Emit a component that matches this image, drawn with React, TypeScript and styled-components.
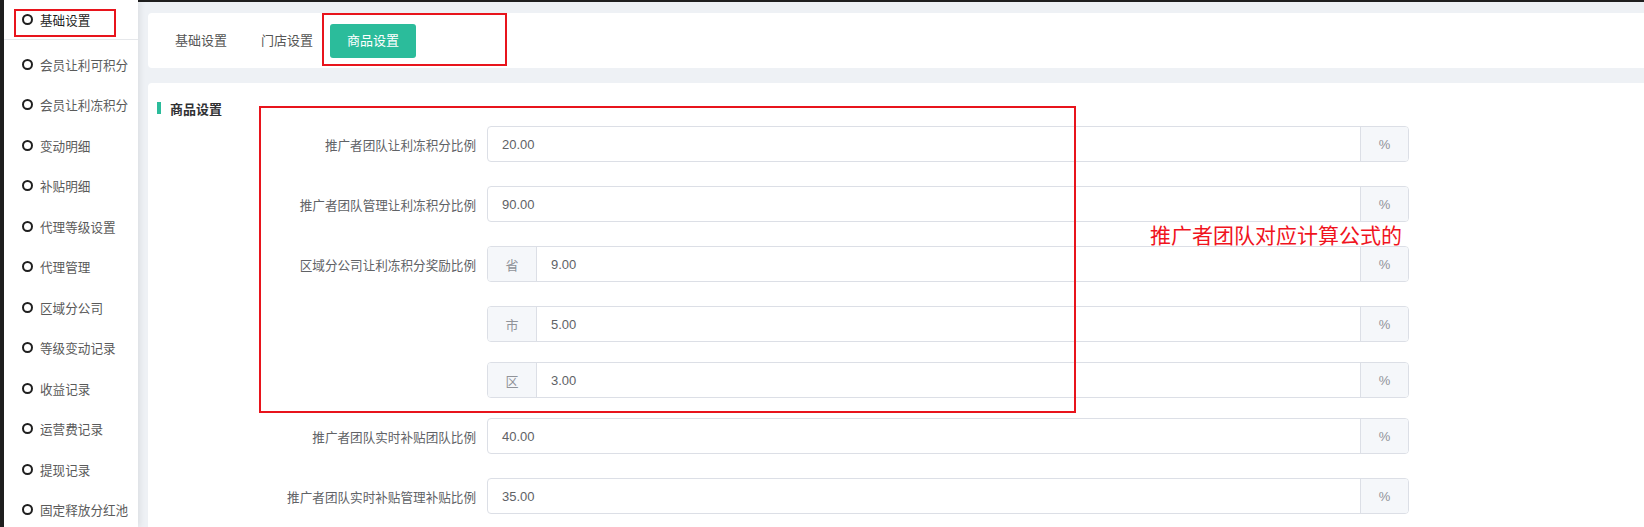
import React from "react";
import styled, { createGlobalStyle, css } from "styled-components";

const GlobalStyle = createGlobalStyle`
  html, body {
    margin: 0;
    padding: 0;
    height: 527px;
    overflow: hidden;
    background: #1f1f1f;
  }
  body {
    font-family: "Liberation Sans", "Noto Sans CJK SC", sans-serif;
    font-size: 13px;
  }
  * { box-sizing: border-box; }
`;

const Shell = styled.div`
  display: flex;
  height: 527px;
  padding-left: 4px;
  background: #1f1f1f;
`;

const Sidebar = styled.aside`
  position: relative;
  z-index: 1;
  width: 134px;
  flex-shrink: 0;
  background: #fff;
  box-shadow: 2px 0 6px rgba(0, 0, 0, 0.08);
`;

const SideHead = styled.div`
  height: 40px;
  border-bottom: 1px solid #e6e8eb;
`;

const NavList = styled.div`
  padding-top: 4px;
`;

const NavItem = styled.div<{ $active?: boolean }>`
  display: flex;
  align-items: center;
  gap: 7px;
  height: ${(p) => (p.$active ? "39px" : "40.5px")};
  padding-left: 18px;
  font-size: 12.6px;
  white-space: nowrap;
  color: ${(p) => (p.$active ? "#1f1f1f" : "#5a5a5a")};
`;

const Dot = styled.span`
  width: 11px;
  height: 11px;
  border: 2px solid #1f1f1f;
  border-radius: 50%;
  flex-shrink: 0;
`;

const Mark = styled.div<{ $l: number; $t: number; $w: number; $h: number }>`
  position: absolute;
  left: ${(p) => p.$l}px;
  top: ${(p) => p.$t}px;
  width: ${(p) => p.$w}px;
  height: ${(p) => p.$h}px;
  border: 2px solid #e8141c;
  pointer-events: none;
`;

const Main = styled.main`
  flex: 1;
  min-width: 0;
  display: flex;
  flex-direction: column;
  gap: 15px;
  overflow: hidden;
  background: #eef1f5;
  border-top: 2px solid #1f1f1f;
  padding: 11px 0 0 10px;
`;

const TabCard = styled.div`
  position: relative;
  flex-shrink: 0;
  display: flex;
  align-items: center;
  height: 55px;
  padding-left: 10px;
  background: #fff;
  border-radius: 4px 0 0 4px;
`;

const Tab = styled.div<{ $active?: boolean }>`
  height: 34px;
  line-height: 34px;
  padding: 0 17px;
  font-size: 13px;
  color: #555;
  border-radius: 3px;
  ${(p) =>
    p.$active &&
    css`
      background: #2bbc9b;
      color: #fff;
    `}
`;

const ContentCard = styled.section`
  position: relative;
  flex: 1 0 auto;
  background: #fff;
  border-radius: 4px 0 0 0;
  padding: 16px 0 0 9px;
`;

const SectionTitle = styled.div`
  display: flex;
  align-items: center;
  gap: 9px;
  height: 18px;
  font-size: 13px;
  font-weight: bold;
  color: #303133;
`;

const TitleBar = styled.span`
  width: 4px;
  height: 12px;
  background: #2bbc9b;
`;

const Form = styled.div`
  margin-top: 9px;
`;

const FormRow = styled.div<{ $tight?: boolean }>`
  display: flex;
  align-items: center;
  margin-bottom: ${(p) => (p.$tight ? "20px" : "24px")};
`;

const Label = styled.div`
  width: 330px;
  padding-right: 11px;
  text-align: right;
  font-size: 12.6px;
  color: #606266;
  white-space: nowrap;
`;

const InputGroup = styled.div`
  display: flex;
  width: 922px;
  height: 36px;
  border: 1px solid #dcdfe6;
  border-radius: 4px;
  overflow: hidden;
`;

const Addon = styled.div<{ $side: "left" | "right" }>`
  width: ${(p) => (p.$side === "left" ? "49px" : "48px")};
  flex-shrink: 0;
  display: flex;
  align-items: center;
  justify-content: center;
  background: #f5f7fa;
  color: #909399;
  font-size: 13px;
  ${(p) =>
    p.$side === "left"
      ? css`border-right: 1px solid #dcdfe6;`
      : css`border-left: 1px solid #dcdfe6;`}
`;

const Value = styled.div`
  flex: 1;
  display: flex;
  align-items: center;
  padding-left: 14px;
  color: #606266;
  font-size: 13px;
`;

const Note = styled.div`
  position: absolute;
  left: 1002px;
  top: 140px;
  font-size: 21px;
  line-height: 26px;
  color: #f0141e;
  white-space: nowrap;
`;

const navItems = [
  "会员让利可积分",
  "会员让利冻积分",
  "变动明细",
  "补贴明细",
  "代理等级设置",
  "代理管理",
  "区域分公司",
  "等级变动记录",
  "收益记录",
  "运营费记录",
  "提现记录",
  "固定释放分红池",
];

type Row = { label: string; value: string; prefix?: string; tight?: boolean };

const rows: Row[] = [
  { label: "推广者团队让利冻积分比例", value: "20.00" },
  { label: "推广者团队管理让利冻积分比例", value: "90.00" },
  { label: "区域分公司让利冻积分奖励比例", value: "9.00", prefix: "省" },
  { label: "", value: "5.00", prefix: "市", tight: true },
  { label: "", value: "3.00", prefix: "区", tight: true },
  { label: "推广者团队实时补贴团队比例", value: "40.00" },
  { label: "推广者团队实时补贴管理补贴比例", value: "35.00" },
];

export default function App() {
  return (
    <>
      <GlobalStyle />
      <Shell>
        <Sidebar>
          <SideHead>
            <NavItem $active>
              <Dot />
              基础设置
            </NavItem>
          </SideHead>
          <NavList>
            {navItems.map((t) => (
              <NavItem key={t}>
                <Dot />
                {t}
              </NavItem>
            ))}
          </NavList>
          <Mark $l={10} $t={9} $w={102} $h={28} />
        </Sidebar>
        <Main>
          <TabCard>
            <Tab>基础设置</Tab>
            <Tab>门店设置</Tab>
            <Tab $active>商品设置</Tab>
            <Mark $l={174} $t={0} $w={185} $h={53} />
          </TabCard>
          <ContentCard>
            <SectionTitle>
              <TitleBar />
              商品设置
            </SectionTitle>
            <Form>
              {rows.map((r, i) => (
                <FormRow key={i} $tight={r.tight}>
                  <Label>{r.label}</Label>
                  <InputGroup>
                    {r.prefix && <Addon $side="left">{r.prefix}</Addon>}
                    <Value>{r.value}</Value>
                    <Addon $side="right">%</Addon>
                  </InputGroup>
                </FormRow>
              ))}
            </Form>
            <Mark $l={111} $t={23} $w={817} $h={307} />
            <Note>推广者团队对应计算公式的</Note>
          </ContentCard>
        </Main>
      </Shell>
    </>
  );
}
